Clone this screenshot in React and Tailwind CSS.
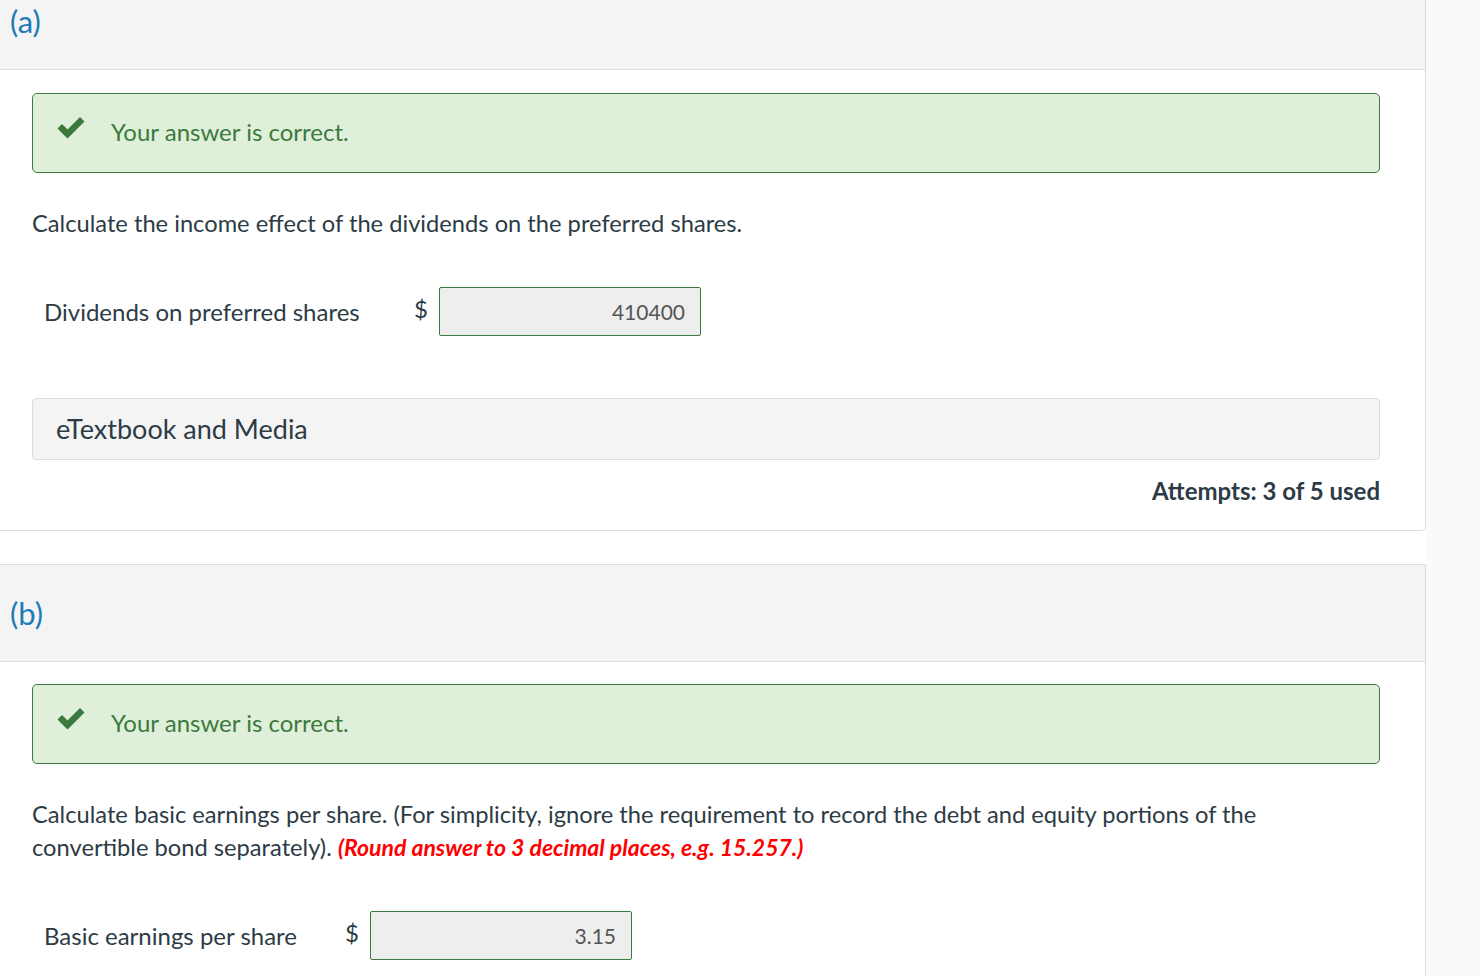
function Check() {
  return (
    <svg width="28" height="22" viewBox="0 0 28 22" className="shrink-0">
      <path d="M1.5 11.5 L5 8 L10.5 13.5 L23 1 L26.5 4.5 L10.5 20.5 Z" fill="#3b7a3e" strokeLinejoin="round" stroke="#3b7a3e" strokeWidth="1.5" />
    </svg>
  );
}

function Correct() {
  return (
    <div className="flex items-center h-[80px] rounded-[5px] border border-[#3b7a3e] bg-[#e0efd9] pl-[24px]">
      <div className="flex items-center gap-[26px] -mt-[2px]">
        <div className="-mt-[8px]"><Check /></div>
        <span className="text-[24px] text-[#3b7a3e]">Your answer is correct.</span>
      </div>
    </div>
  );
}

function AnswerRow({ label, value, labelW }) {
  return (
    <div className="flex items-center pl-[12px]">
      <span className={`text-[24px] text-[#2d3b45] ${labelW}`}>{label}</span>
      <span className="text-[24px] text-[#2d3b45] w-[25px] -mt-[6px]">$</span>
      <div className="w-[262px] h-[49px] bg-[#eeeeee] border border-[#3b7a3e] rounded-[2px] flex items-center justify-end pr-[15px] text-[21px] text-[#555555]">
        {value}
      </div>
    </div>
  );
}

export default function App() {
  return (
    <div className="w-[1480px] h-[976px] overflow-hidden bg-[#fafafa] flex" style={{ fontFamily: "Lato, 'Liberation Sans', sans-serif" }}>
      <div className="w-[1426px] bg-white flex flex-col">
        {/* part (a) */}
        <div className="border-r border-b border-[#dddddd] rounded-br-[5px]">
          <div className="h-[70px] bg-[#f4f4f4] border-b border-[#dddddd] pl-[10px] pt-[1px]">
            <span className="text-[31px] leading-[40px] text-[#1d7bb9]">(a)</span>
          </div>
          <div className="pl-8 pr-[45px] pt-[23px]">
            <Correct />
            <p className="text-[23.7px] text-[#2d3b45] mt-[34px] leading-[32px]">Calculate the income effect of the dividends on the preferred shares.</p>
            <div className="mt-[48px]">
              <AnswerRow label="Dividends on preferred shares" value="410400" labelW="w-[370px]" />
            </div>
            <div className="mt-[62px] h-[62px] bg-[#f4f4f4] border border-[#dddddd] rounded-[4px] flex items-center pl-[23px]">
              <span className="text-[27px] text-[#2d3b45]">eTextbook and Media</span>
            </div>
            <div className="flex justify-end mt-[15px] h-[55px]">
              <span className="text-[24px] font-bold text-[#2d3b45] leading-[32px]">Attempts: 3 of 5 used</span>
            </div>
          </div>
        </div>

        {/* part (b) */}
        <div className="mt-[33px] border-t border-r border-[#dddddd] flex-1">
          <div className="h-[97px] bg-[#f4f4f4] border-b border-[#dddddd] pl-[10px] flex items-center">
            <span className="text-[31px] text-[#1d7bb9]">(b)</span>
          </div>
          <div className="pl-8 pr-[45px] pt-[22px]">
            <Correct />
            <p className="text-[23.7px] text-[#2d3b45] mt-[34px] leading-[33px] max-w-[1260px]">
              Calculate basic earnings per share. (For simplicity, ignore the requirement to record the debt and equity portions of the convertible bond separately).{" "}
              <em className="text-[23px] font-bold text-[#ff0000]">(Round answer to 3 decimal places, e.g. 15.257.)</em>
            </p>
            <div className="mt-[47px]">
              <AnswerRow label="Basic earnings per share" value="3.15" labelW="w-[301px]" />
            </div>
          </div>
        </div>
      </div>
    </div>
  );
}
